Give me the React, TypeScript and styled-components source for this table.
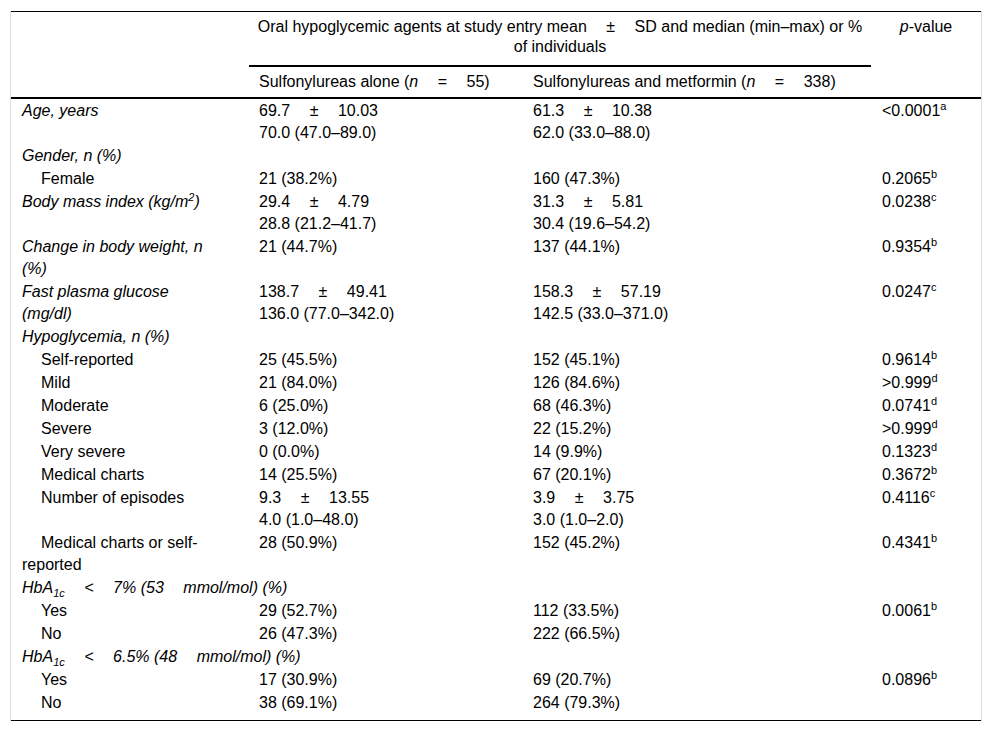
import React from "react";
import styled, { createGlobalStyle } from "styled-components";

const Global = createGlobalStyle`
  html, body { margin: 0; padding: 0; background: #fff; }
  body { font-family: "Liberation Sans", Arial, Helvetica, sans-serif; color: #000; }
`;

const Frame = styled.div`
  margin: 11px 10px 0;
  width: 970px;
  border-left: 1px solid #dedede;
  border-right: 1px solid #dedede;
`;

const Table = styled.table`
  width: 970px;
  table-layout: fixed;
  border-collapse: collapse;
  border-top: 1px solid #000;
  border-bottom: 1px solid #000;
  font-size: 16px;
`;

const Col = styled.col<{ $w: number }>`
  width: ${(p) => p.$w}px;
`;

const HeadCell = styled.th<{ $align?: string; $top?: number; $bottom?: number; $side?: number; $rule?: boolean }>`
  font-weight: normal;
  line-height: 20px;
  padding: ${(p) => p.$top ?? 5}px ${(p) => p.$side ?? 10}px ${(p) => p.$bottom ?? 5}px;
  text-align: ${(p) => p.$align || "left"};
  vertical-align: top;
  border-bottom: ${(p) => (p.$rule ? "2px solid #000" : "none")};
`;

const Cell = styled.td<{ $last?: boolean }>`
  padding: 1px 10px ${(p) => (p.$last ? 6 : 0)}px 10px;
  line-height: 22px;
  vertical-align: top;
  text-align: left;
`;

const LabelCell = styled(Cell)<{ $sub?: boolean; $italic?: boolean }>`
  padding-left: 11px;
  padding-right: 44px;
  font-style: ${(p) => (p.$italic ? "italic" : "normal")};
  text-indent: ${(p) => (p.$sub ? 19 : 0)}px;
`;

const PCell = styled(Cell)`
  padding-left: 11px;
`;

const GroupCell = styled.td`
  padding: 1px 10px 0 11px;
  line-height: 22px;
  font-style: italic;
  white-space: nowrap;
`;

const Line = styled.span`
  display: block;
`;

const Op = styled.span<{ $l?: number; $r?: number }>`
  margin: 0 ${(p) => p.$r ?? 19.5}px 0 ${(p) => p.$l ?? 19.5}px;
`;

const Sup = styled.sup`
  font-size: 11px;
  line-height: 0;
  vertical-align: 6px;
`;

const Sub = styled.sub`
  font-size: 11px;
  line-height: 0;
  vertical-align: -4px;
`;

const Em = styled.i`
  font-style: italic;
`;

type Kind = "cat" | "sub" | "group";
interface Row {
  kind: Kind;
  label: React.ReactNode;
  a?: React.ReactNode;
  b?: React.ReactNode;
  p?: React.ReactNode;
}

const ms = (m: string, sd: string, med: string) => (
  <>
    <Line>
      {m}
      <Op>±</Op>
      {sd}
    </Line>
    <Line>{med}</Line>
  </>
);

const pv = (v: string, s: string) => (
  <>
    {v}
    <Sup>{s}</Sup>
  </>
);

const hba = (pct: string, mmol: string) => (
  <>
    HbA<Sub>1c</Sub>
    <Op>&lt;</Op>
    {pct} ({mmol}
    <Op $l={0}></Op>
    mmol/mol) (%)
  </>
);

const rows: Row[] = [
  { kind: "cat", label: "Age, years", a: ms("69.7", "10.03", "70.0 (47.0–89.0)"), b: ms("61.3", "10.38", "62.0 (33.0–88.0)"), p: pv("<0.0001", "a") },
  { kind: "group", label: "Gender, n (%)" },
  { kind: "sub", label: "Female", a: "21 (38.2%)", b: "160 (47.3%)", p: pv("0.2065", "b") },
  {
    kind: "cat",
    label: (
      <>
        Body mass index (kg/m<Sup>2</Sup>)
      </>
    ),
    a: ms("29.4", "4.79", "28.8 (21.2–41.7)"),
    b: ms("31.3", "5.81", "30.4 (19.6–54.2)"),
    p: pv("0.0238", "c"),
  },
  { kind: "cat", label: "Change in body weight, n (%)", a: "21 (44.7%)", b: "137 (44.1%)", p: pv("0.9354", "b") },
  { kind: "cat", label: "Fast plasma glucose (mg/dl)", a: ms("138.7", "49.41", "136.0 (77.0–342.0)"), b: ms("158.3", "57.19", "142.5 (33.0–371.0)"), p: pv("0.0247", "c") },
  { kind: "group", label: "Hypoglycemia, n (%)" },
  { kind: "sub", label: "Self-reported", a: "25 (45.5%)", b: "152 (45.1%)", p: pv("0.9614", "b") },
  { kind: "sub", label: "Mild", a: "21 (84.0%)", b: "126 (84.6%)", p: pv(">0.999", "d") },
  { kind: "sub", label: "Moderate", a: "6 (25.0%)", b: "68 (46.3%)", p: pv("0.0741", "d") },
  { kind: "sub", label: "Severe", a: "3 (12.0%)", b: "22 (15.2%)", p: pv(">0.999", "d") },
  { kind: "sub", label: "Very severe", a: "0 (0.0%)", b: "14 (9.9%)", p: pv("0.1323", "d") },
  { kind: "sub", label: "Medical charts", a: "14 (25.5%)", b: "67 (20.1%)", p: pv("0.3672", "b") },
  { kind: "sub", label: "Number of episodes", a: ms("9.3", "13.55", "4.0 (1.0–48.0)"), b: ms("3.9", "3.75", "3.0 (1.0–2.0)"), p: pv("0.4116", "c") },
  { kind: "sub", label: "Medical charts or self-reported", a: "28 (50.9%)", b: "152 (45.2%)", p: pv("0.4341", "b") },
  { kind: "group", label: hba("7%", "53") },
  { kind: "sub", label: "Yes", a: "29 (52.7%)", b: "112 (33.5%)", p: pv("0.0061", "b") },
  { kind: "sub", label: "No", a: "26 (47.3%)", b: "222 (66.5%)" },
  { kind: "group", label: hba("6.5%", "48") },
  { kind: "sub", label: "Yes", a: "17 (30.9%)", b: "69 (20.7%)", p: pv("0.0896", "b") },
  { kind: "sub", label: "No", a: "38 (69.1%)", b: "264 (79.3%)" },
];

export default function App() {
  return (
    <>
      <Global />
      <Frame>
        <Table>
          <colgroup>
            <Col $w={238} />
            <Col $w={274} />
            <Col $w={348} />
            <Col $w={110} />
          </colgroup>
          <thead>
            <tr>
              <HeadCell rowSpan={2} $rule />
              <HeadCell colSpan={2} $align="center" $top={5} $bottom={8} $side={4} $rule>
                Oral hypoglycemic agents at study entry mean
                <Op>±</Op>
                SD and median (min–max) or % of individuals
              </HeadCell>
              <HeadCell rowSpan={2} $align="center" $rule>
                <Em>p</Em>-value
              </HeadCell>
            </tr>
            <tr>
              <HeadCell $rule>
                Sulfonylureas alone (<Em>n</Em>
                <Op>=</Op>
                55)
              </HeadCell>
              <HeadCell $rule>
                Sulfonylureas and metformin (<Em>n</Em>
                <Op>=</Op>
                338)
              </HeadCell>
            </tr>
          </thead>
          <tbody>
            {rows.map((r, i) => {
              const last = i === rows.length - 1;
              if (r.kind === "group") {
                return (
                  <tr key={i}>
                    <GroupCell colSpan={4}>{r.label}</GroupCell>
                  </tr>
                );
              }
              return (
                <tr key={i}>
                  <LabelCell $italic={r.kind === "cat"} $sub={r.kind === "sub"} $last={last}>
                    {r.label}
                  </LabelCell>
                  <Cell $last={last}>{r.a}</Cell>
                  <Cell $last={last}>{r.b}</Cell>
                  <PCell $last={last}>{r.p}</PCell>
                </tr>
              );
            })}
          </tbody>
        </Table>
      </Frame>
    </>
  );
}
